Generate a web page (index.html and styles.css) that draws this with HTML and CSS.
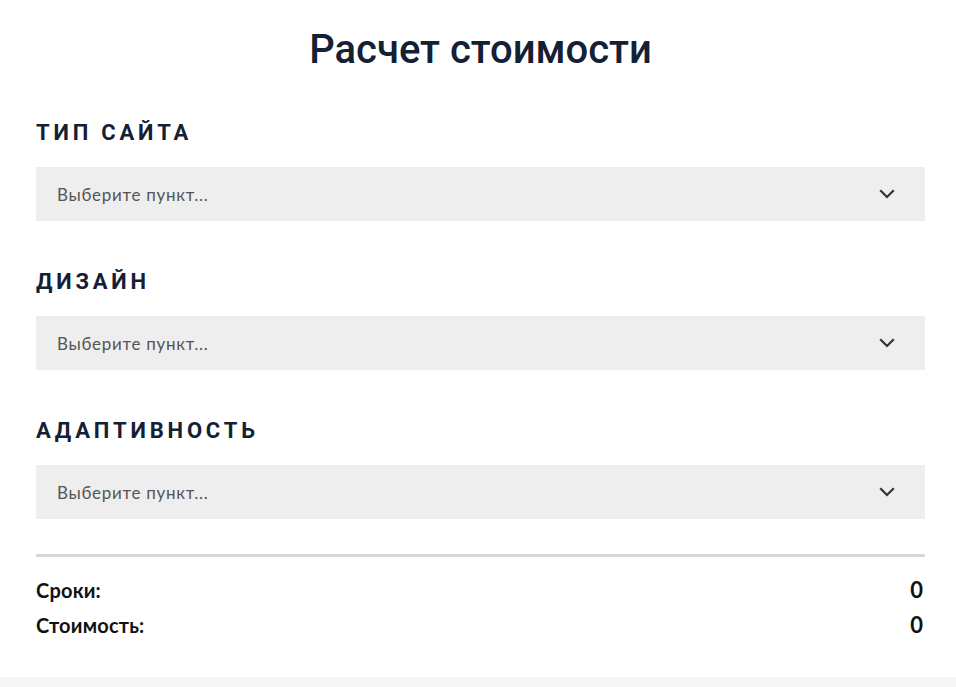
FILE: index.html
```html
<!DOCTYPE html>
<html lang="ru">
<head>
<meta charset="utf-8">
<title>Расчет стоимости</title>
<link rel="stylesheet" href="styles.css">
</head>
<body>
<div class="card">
  <h1 class="title">Расчет стоимости</h1>
  <div class="field">
    <div class="label">Тип сайта</div>
    <div class="select"><span class="placeholder">Выберите пункт...</span>
      <svg class="chev" width="16" height="10" viewBox="0 0 16 10"><path d="M2 2l6 6 6-6" fill="none" stroke="#333" stroke-width="2.2" stroke-linecap="square"/></svg>
    </div>
  </div>
  <div class="field">
    <div class="label">Дизайн</div>
    <div class="select"><span class="placeholder">Выберите пункт...</span>
      <svg class="chev" width="16" height="10" viewBox="0 0 16 10"><path d="M2 2l6 6 6-6" fill="none" stroke="#333" stroke-width="2.2" stroke-linecap="square"/></svg>
    </div>
  </div>
  <div class="field">
    <div class="label">Адаптивность</div>
    <div class="select"><span class="placeholder">Выберите пункт...</span>
      <svg class="chev" width="16" height="10" viewBox="0 0 16 10"><path d="M2 2l6 6 6-6" fill="none" stroke="#333" stroke-width="2.2" stroke-linecap="square"/></svg>
    </div>
  </div>
  <div class="summary">
    <div class="row"><span class="key">Сроки:</span><span class="val">0</span></div>
    <div class="row"><span class="key">Стоимость:</span><span class="val">0</span></div>
  </div>
</div>
</body>
</html>
```
FILE: styles.css
```css
html, body {
  margin: 0;
  padding: 0;
  background: #f6f6f6;
}
.card {
  background: #ffffff;
  height: 677px;
  box-sizing: border-box;
  padding: 26px 31px 0 36px;
  font-family: Roboto, "Noto Sans", sans-serif;
  color: #142033;
}
.title {
  margin: 0;
  text-align: center;
  font-size: 40px;
  font-weight: 500;
  line-height: 48px;
  color: #142033;
}
.field {
  margin-top: 45px;
}
.field + .field {
  margin-top: 47px;
}
.label {
  text-transform: uppercase;
  font-size: 22px;
  font-weight: 700;
  letter-spacing: 3.8px;
  line-height: 28px;
  margin-bottom: 20px;
}
.select {
  height: 54px;
  background: #eeeeee;
  display: flex;
  align-items: center;
  justify-content: space-between;
  padding: 0 30px 0 21px;
}
.placeholder {
  font-family: Lato, "Noto Sans", sans-serif;
  font-size: 17px;
  letter-spacing: 0.7px;
  color: #555555;
}
.chev {
  display: block;
}
.summary {
  margin-top: 35px;
  border-top: 3px solid #d6d6d6;
  padding-top: 15px;
  font-family: Lato, "Noto Sans", sans-serif;
  color: #111111;
}
.row {
  display: flex;
  justify-content: space-between;
  align-items: baseline;
  height: 35px;
  line-height: 36px;
}
.key {
  font-size: 20px;
  font-weight: 700;
  letter-spacing: 0.2px;
}
.val {
  font-size: 22px;
  font-weight: 700;
  padding-right: 2px;
}
```
